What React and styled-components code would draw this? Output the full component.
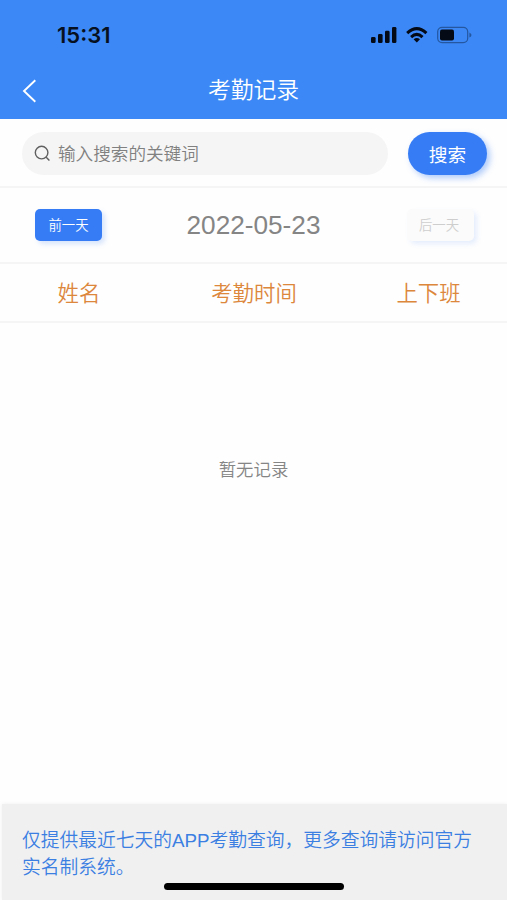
import React, { useState } from 'react';
import styled, { createGlobalStyle } from 'styled-components';

const GlobalStyle = createGlobalStyle`
    * {
        box-sizing: border-box;
    }

    body {
        margin: 0;
        background: #fefefe;
        font-family: "Liberation Sans", "Noto Sans CJK SC", sans-serif;
        font-weight: 350;
    }
`
const Page = styled.div`
    display: flex;
    flex-direction: column;
    width: 507px;
    height: 900px;
    overflow: hidden;
`
// blue top part
const Header = styled.header`
    height: 119px;
    background: #3c88f6;
`
const StatusBar = styled.div`
    display: flex;
    align-items: center;
    justify-content: space-between;
    height: 62px;
    padding: 7px 33px 0 57px;
`
const Clock = styled.span`
    font-family: Inter, sans-serif;
    font-size: 22px;
    font-weight: 600;
    line-height: 26px;
    color: #06101f;
`
const StatusIcons = styled.svg`
    display: block;
    width: 104px;
    height: 20px;
`
const NavBar = styled.div`
    display: grid;
    grid-template-columns: 60px 1fr 60px;
    align-items: center;
    height: 57px;
`
const BackButton = styled.button`
    width: 60px;
    height: 40px;
    padding: 0 0 0 21px;
    border: 0;
    background: none;

    svg {
        display: block;
    }
`
const Title = styled.h1`
    margin: 0;
    padding-bottom: 2px;
    font-size: 22.8px;
    font-weight: 350;
    line-height: 32px;
    text-align: center;
    color: white;
`
// search row
const SearchBar = styled.div`
    display: flex;
    align-items: center;
    gap: 20px;
    height: 69px;
    padding: 2px 20px 0 22px;
    border-bottom: 2px solid #f5f5f5;
`
const SearchBox = styled.label`
    display: flex;
    align-items: center;
    gap: 7px;
    width: 366px;
    height: 43px;
    padding-left: 12px;
    border-radius: 22px;
    background: #f5f5f5;
`
const SearchInput = styled.input`
    flex: 1;
    min-width: 0;
    height: 32px;
    padding: 2px 0 0;
    border: 0;
    outline: 0;
    background: none;
    font-family: inherit;
    font-size: 17.6px;
    font-weight: 350;
    color: #808080;

    &::placeholder {
        color: #808080;
        opacity: 1;
    }
`
const SearchButton = styled.button`
    width: 79px;
    height: 43px;
    padding: 0 0 1px;
    border: 0;
    border-radius: 22px;
    background: #367df5;
    box-shadow: 3px 3px 6px rgba(54, 125, 245, .4);
    font-family: inherit;
    font-size: 18.7px;
    font-weight: 400;
    color: white;
`
// day switch row
const DateBar = styled.div`
    display: flex;
    align-items: center;
    justify-content: space-between;
    height: 76px;
    padding: 0 33px 0 35px;
    border-bottom: 2px solid #f5f5f5;
`
const DayButton = styled.button`
    width: 67px;
    height: 32px;
    padding: 0;
    border: 0;
    border-radius: 5px;
    background: ${props => (props.disabled ? '#fbfbfb' : '#367df5')};
    box-shadow: 3px 3px 5px ${props => (props.disabled ? 'rgba(54, 125, 245, .12)' : 'rgba(54, 125, 245, .2)')};
    font-family: inherit;
    font-size: 13.4px;
    font-weight: 350;
    line-height: 34px;
    text-indent: ${props => (props.disabled ? '-3px' : '0')};
    color: ${props => (props.disabled ? '#cecece' : 'white')};
`
const CurrentDate = styled.span`
    margin-right: 2px;
    font-size: 26.2px;
    line-height: 32px;
    color: #858585;
`
const TableHead = styled.div`
    display: grid;
    grid-template-columns: 158px 192px 157px;
    align-items: center;
    height: 59px;
    padding-top: 2px;
    border-bottom: 2px solid #f5f5f5;
    font-size: 21.4px;
    line-height: 30px;
    text-align: center;
    color: #dc873c;
`
const Empty = styled.p`
    flex: 1;
    margin: 0;
    padding-top: 134px;
    font-size: 17.4px;
    line-height: 26px;
    text-align: center;
    color: #858585;
`
const Footer = styled.footer`
    display: flex;
    flex-direction: column;
    justify-content: space-between;
    height: 96px;
    margin-left: 2px;
    padding: 23px 20px 10px;
    background: #f0f0f0;
    box-shadow: 0 0 4px #f0f0f0;
`
const Notice = styled.p`
    margin: 0;
    font-size: 18.76px;
    line-height: 27px;
    white-space: nowrap;
    color: #3c7fe2;
`
const HomeIndicator = styled.div`
    align-self: center;
    flex-shrink: 0;
    width: 180px;
    height: 7px;
    margin: 0 2px 0 0;
    border-radius: 4px;
    background: black;
`

const columns = ['姓名', '考勤时间', '上下班'];

const App = () => {
    const [keyword, setKeyword] = useState('');

    return (
        <>
            <GlobalStyle />
            <Page>
                <Header>
                    <StatusBar>
                        <Clock>15:31</Clock>
                        <StatusIcons viewBox="0 0 104 20" fill="#050b16">
                            <rect x="1" y="12" width="4.6" height="6" rx="1.3" />
                            <rect x="8" y="9" width="4.6" height="9" rx="1.3" />
                            <rect x="15" y="5.8" width="4.6" height="12.2" rx="1.3" />
                            <rect x="22" y="2" width="4.4" height="16" rx="1.3" />
                            <g fill="none" stroke="#050b16" strokeWidth="3">
                                <path d="M37.2 8.2 Q46.8 -1 56.4 8.2" />
                                <path d="M41.1 12.1 Q46.8 6.6 52.5 12.1" />
                            </g>
                            <path d="M43.6 14.2 Q46.8 11.6 50 14.2 L46.8 17.6 Z" />
                            <rect x="67.7" y="2.4" width="30" height="15.2" rx="4.4" fill="none" stroke="#24579f" strokeWidth="1.2" />
                            <rect x="70" y="4.6" width="14" height="10.8" rx="2" />
                            <path d="M99.4 7.4 Q101.5 8.4 101.5 10 Q101.5 11.6 99.4 12.6 Z" fill="#24579f" />
                        </StatusIcons>
                    </StatusBar>
                    <NavBar>
                        <BackButton type="button" aria-label="返回">
                            <svg width="16" height="24" viewBox="0 0 16 24" fill="none" stroke="white" strokeWidth="1.9">
                                <path d="M14.3 1.3 L3 12 L14.3 22.7" />
                            </svg>
                        </BackButton>
                        <Title>考勤记录</Title>
                    </NavBar>
                </Header>
                <SearchBar>
                    <SearchBox>
                        <svg width="17" height="17" viewBox="0 0 17 17" fill="none" stroke="#606060" strokeWidth="1.4">
                            <circle cx="7.6" cy="7.6" r="6.3" />
                            <path d="M12.2 12.2 L15.4 15.6" />
                        </svg>
                        <SearchInput
                        type='text'
                        placeholder='输入搜索的关键词'
                        value={keyword}
                        onChange={e => setKeyword(e.target.value)} />
                    </SearchBox>
                    <SearchButton type="button">搜索</SearchButton>
                </SearchBar>
                <DateBar>
                    <DayButton type="button">前一天</DayButton>
                    <CurrentDate>2022-05-23</CurrentDate>
                    <DayButton type="button" disabled>后一天</DayButton>
                </DateBar>
                <TableHead>
                    {columns.map(name => (
                        <span key={name}>{name}</span>
                    ))}
                </TableHead>
                <Empty>暂无记录</Empty>
                <Footer>
                    <Notice>
                        仅提供最近七天的APP考勤查询，更多查询请访问官方<br />
                        实名制系统。
                    </Notice>
                    <HomeIndicator />
                </Footer>
            </Page>
        </>
    );
};

export default App;
